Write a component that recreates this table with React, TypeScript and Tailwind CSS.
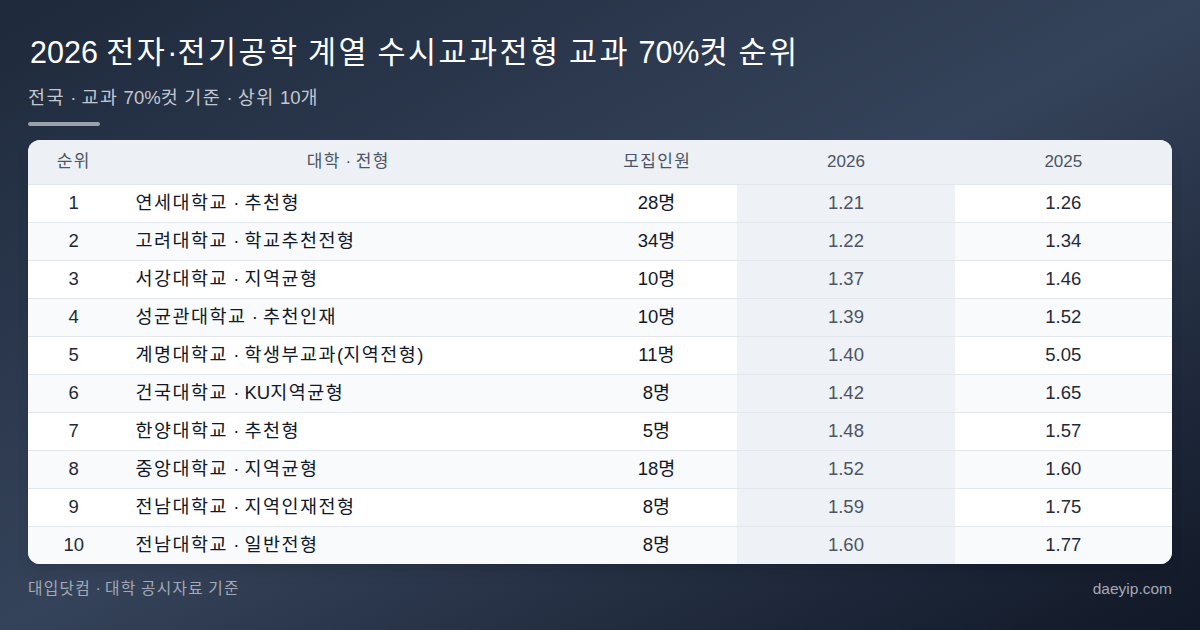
import React from "react";

const rows = [
  { rank: 1, name: "연세대학교 · 추천형", quota: "28명", y2026: "1.21", y2025: "1.26" },
  { rank: 2, name: "고려대학교 · 학교추천전형", quota: "34명", y2026: "1.22", y2025: "1.34" },
  { rank: 3, name: "서강대학교 · 지역균형", quota: "10명", y2026: "1.37", y2025: "1.46" },
  { rank: 4, name: "성균관대학교 · 추천인재", quota: "10명", y2026: "1.39", y2025: "1.52" },
  { rank: 5, name: "계명대학교 · 학생부교과(지역전형)", quota: "11명", y2026: "1.40", y2025: "5.05" },
  { rank: 6, name: "건국대학교 · KU지역균형", quota: "8명", y2026: "1.42", y2025: "1.65" },
  { rank: 7, name: "한양대학교 · 추천형", quota: "5명", y2026: "1.48", y2025: "1.57" },
  { rank: 8, name: "중앙대학교 · 지역균형", quota: "18명", y2026: "1.52", y2025: "1.60" },
  { rank: 9, name: "전남대학교 · 지역인재전형", quota: "8명", y2026: "1.59", y2025: "1.75" },
  { rank: 10, name: "전남대학교 · 일반전형", quota: "8명", y2026: "1.60", y2025: "1.77" },
];

const K: React.FC<{ text: string }> = ({ text }) => (
  <>
    {text.split(/([\uAC00-\uD7A3]+)/).map((part, i) =>
      /[\uAC00-\uD7A3]/.test(part) ? (
        <span key={i} className="tracking-[0.08em]">
          {part}
        </span>
      ) : (
        <React.Fragment key={i}>{part}</React.Fragment>
      ),
    )}
  </>
);

export default function App() {
  return (
    <div
      className="w-[1200px] h-[630px] overflow-hidden bg-linear-to-br from-[#1e293b] via-[#35435a] to-[#111827] px-[28px] pt-[32px] flex flex-col"
      style={{ fontFamily: '"Liberation Sans", "Noto Sans CJK KR", sans-serif' }}
    >
      <h1 className="text-[30.5px] leading-[40px] text-white pl-[2px] whitespace-nowrap">
        <K text="2026 전자·전기공학 계열 수시교과전형 교과 70%컷 순위" />
      </h1>
      <p className="mt-[13px] text-[18.5px] leading-[26px] text-[#c3c8d0]">
        <K text="전국 · 교과 70%컷 기준 · 상위 10개" />
      </p>
      <div className="mt-[11px] h-[4px] w-[72px] rounded-full bg-[#9aa1ab]" />

      <div className="mt-[14px] rounded-[12px] overflow-hidden bg-white shadow-lg">
        <table className="w-full border-collapse table-fixed">
          <colgroup>
            <col className="w-[8%]" />
            <col className="w-[40%]" />
            <col className="w-[14%]" />
            <col className="w-[19%]" />
            <col className="w-[19%]" />
          </colgroup>
          <thead>
            <tr className="h-[44px] bg-[#edf0f5] text-[17px] text-[#4b5563] border-b border-[#e2e7ee]">
              <th className="font-normal text-center">
                <K text="순위" />
              </th>
              <th className="font-normal text-center">
                <K text="대학 · 전형" />
              </th>
              <th className="font-normal text-center">
                <K text="모집인원" />
              </th>
              <th className="font-normal text-center">2026</th>
              <th className="font-normal text-center">2025</th>
            </tr>
          </thead>
          <tbody className="text-[18.5px]">
            {rows.map((r, i) => (
              <tr
                key={r.rank}
                className={`h-[38px] ${i < rows.length - 1 ? "border-b border-[#e2e7ee]" : ""} ${
                  i % 2 === 1 ? "bg-[#f8fafc]" : "bg-white"
                }`}
              >
                <td className="text-center text-[#1f2937]">{r.rank}</td>
                <td className="px-4 text-[#111827] whitespace-nowrap">
                  <K text={r.name} />
                </td>
                <td className="text-center text-[#111827]">
                  <K text={r.quota} />
                </td>
                <td className="text-center text-[#4b5563] bg-[#eef1f6]">{r.y2026}</td>
                <td className="text-center text-[#1f2937]">{r.y2025}</td>
              </tr>
            ))}
          </tbody>
        </table>
      </div>

      <div className="mt-[15px] flex items-center justify-between leading-[20px] text-[#a3aab5]">
        <span className="text-[15.75px]">
          <K text="대입닷컴 · 대학 공시자료 기준" />
        </span>
        <span className="text-[15.5px]">daeyip.com</span>
      </div>
    </div>
  );
}
